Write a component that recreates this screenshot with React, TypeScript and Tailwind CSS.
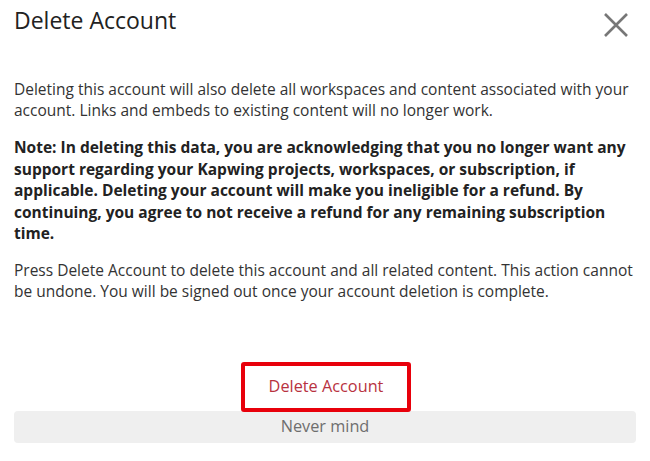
export default function App() {
  return (
    <div className="w-[650px] h-[461px] bg-white overflow-hidden font-['Open_Sans',sans-serif] text-[#333]">
      <div className="flex items-start justify-between pl-[14px] pr-[21px] pt-[4px]">
        <h2 className="text-[23px] leading-[32px] text-[#222]">Delete Account</h2>
        <button type="button" aria-label="Close" className="mt-[8px] text-[#777]">
          <svg width="26" height="26" viewBox="0 0 26 26" fill="none" stroke="currentColor" strokeWidth="2.6">
            <path d="M2 2 L24 24 M24 2 L2 24" />
          </svg>
        </button>
      </div>

      <div className="px-[14px] pt-[41px] text-[15.5px] leading-[21px]">
        <p>
          Deleting this account will also delete all workspaces and content associated with your account. Links and
          embeds to existing content will no longer work.
        </p>
        <p className="mt-[16px] font-bold leading-[21.5px] text-[#222]">
          Note: In deleting this data, you are acknowledging that you no longer want any support regarding your Kapwing
          projects, workspaces, or subscription, if applicable. Deleting your account will make you ineligible for a
          refund. By continuing, you agree to not receive a refund for any remaining subscription time.
        </p>
        <p className="mt-[15px]">
          Press Delete Account to delete this account and all related content. This action cannot be undone. You will be
          signed out once your account deletion is complete.
        </p>
      </div>

      <div className="mt-[60px] flex flex-col items-center px-[14px]">
        <button
          type="button"
          className="relative z-10 ml-[2px] w-[170px] h-[50px] rounded-[3px] border-[4px] border-[#e8000b] bg-white text-[16.3px] text-[#b8323f]"
        >
          Delete Account
        </button>
        <button
          type="button"
          className="-mt-[1px] w-full h-[32px] rounded-[4px] bg-[#efefef] text-[16.3px] text-[#6e6e6e]"
        >
          Never mind
        </button>
      </div>
    </div>
  );
}
